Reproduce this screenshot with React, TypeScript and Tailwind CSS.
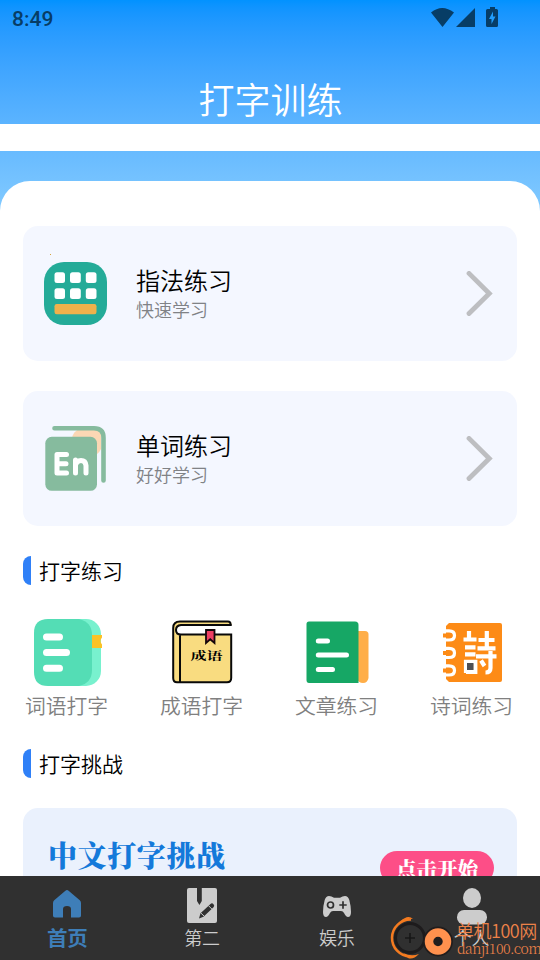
import type { ReactNode } from "react";

const Chevron = () => (
  <svg className="h-[46px] w-[28px]" viewBox="0 0 28 46" fill="none" stroke="#bdbec1" strokeWidth="4.8" strokeLinecap="round" strokeLinejoin="miter">
    <path d="M3 2.400 23.300 22.500 3 42.500" />
  </svg>
);

const KeyboardIcon = () => (
  <svg className="h-[64px] w-[64px]" viewBox="0 0 64 64">
    <rect width="63" height="63" rx="20" fill="#24ab98" />
    <g fill="#fff">
      <rect x="10.500" y="10.300" width="10.500" height="10.800" rx="2.500" />
      <rect x="26" y="10.300" width="10.800" height="10.800" rx="2.500" />
      <rect x="41.800" y="10.300" width="10.700" height="10.800" rx="2.500" />
      <rect x="10.500" y="26.200" width="10.500" height="10.800" rx="2.500" />
      <rect x="26" y="26.200" width="10.800" height="10.800" rx="2.500" />
      <rect x="41.800" y="26.200" width="10.700" height="10.800" rx="2.500" />
    </g>
    <rect x="10.500" y="42" width="42" height="10.300" rx="2.200" fill="#efb14b" />
  </svg>
);

const EnglishIcon = () => (
  <svg className="-mt-px h-[66px] w-[64px]" viewBox="0 0 64 66">
    <path d="M28 13C29 7 34 3 41 3h10q6 0 6 6v15q-1 3-5 6Z" fill="#fbd7b4" />
    <path d="M10.500 3.300H50q9.500 0 9.500 9.500V55.500" fill="none" stroke="#86bb9e" strokeWidth="4.600" strokeLinecap="round" />
    <rect x="1.300" y="11.800" width="51.700" height="54" rx="6.500" fill="#86bb9e" />
    <g fill="none" stroke="#fff" strokeWidth="5" strokeLinecap="round" strokeLinejoin="round">
      <path d="M22.500 29.500H13V48H22.500M13.500 38.700h8.500" />
      <path d="M31.500 35V48M31.500 40q1-4.500 5.500-4.500t5 5V48" />
    </g>
  </svg>
);

const WordsIcon = () => (
  <svg className="ml-1 h-[68px] w-[70px]" viewBox="0 0 70 68">
    <rect x="10" width="57" height="67" rx="15" fill="#78f1ce" />
    <path d="M14 0H45Q58 3 58 16V51Q58 64 45 67H14Q0 67 0 53V14Q0 0 14 0Z" fill="#54ddb5" />
    <path d="M58 16h10v2.500q-3 3.500 0 7V29H58Z" fill="#fbc226" />
    <path d="M12.500 18H25.500M12.500 33.500H32.500M12.500 49.300H25.500" stroke="#fff" strokeWidth="7" strokeLinecap="round" />
  </svg>
);

const IdiomIcon = () => (
  <svg className="ml-0.5 h-[66px] w-[62px]" viewBox="0 0 62 66">
    <path d="M1 7Q1 1.500 7 1.500H57Q59.500 1.500 59.500 4V58Q59.500 62.500 55 62.500H5Q1 62.500 1 58Z" fill="#f9dc80" />
    <path d="M61 4.800H9Q4 5 4 9.500T9 14H61V4.800Z" fill="#fff" />
    <path d="M58.500 5V4Q58.500 1.500 56 1.500H8Q1.200 1.500 1.200 8V58Q1.200 62.300 5 62.300H55Q59.200 62.300 59.200 58V14.500H9Q4 14.500 4 10T9 5H59M8 14.500V62" fill="none" stroke="#090909" strokeWidth="2" strokeLinecap="round" />
    <path d="M34 10H42.500V23L38.200 19.300 34 23Z" fill="#ef3f62" stroke="#14070a" strokeWidth="1.800" />
    <text x="34.500" y="40" fontSize="14" fontWeight="700" textAnchor="middle" textLength="32" lengthAdjust="spacingAndGlyphs" fontFamily="'Noto Serif CJK SC', 'Noto Sans CJK SC', serif" transform="translate(0 5.900) scale(1 .85)">成语</text>
  </svg>
);

const ArticleIcon = () => (
  <svg className="ml-[2px] h-[64px] w-[64px]" viewBox="0 0 64 64">
    <path d="M50 10h9q3.500 0 3.500 3.500V57q-1 5-5.500 5T50 57Z" fill="#ffae48" />
    <path d="M3 .5H49Q52.500.5 52.500 4V62H3Q.5 62 .5 59V3Q.5.5 3 .5Z" fill="#16a765" />
    <path d="M12.300 20H21.500M12.300 34H40.500M12.300 48.500H26.500" stroke="#fff" strokeWidth="5" strokeLinecap="round" />
  </svg>
);

const PoetryIcon = () => (
  <svg className="ml-0.5 h-[62px] w-[62px]" viewBox="0 0 62 62">
    <path d="M7 1h51q2 0 2 2v55q0 2-2 2H7l-3-3V4Z" fill="#fd8b16" />
    <g fill="none" strokeLinecap="butt">
      <path d="M0 8.800H7q5.500 0 5.500 4.600T7 18H0M0 26.300H7q5.500 0 5.500 4.600T7 35.500H0M0 43.800H7q5.500 0 5.500 4.600T7 53H0" stroke="#fff" strokeWidth="3.200" />
      <path d="M1 13.400H7M1 30.900H7M1 48.400H7" stroke="#fd8b16" strokeWidth="4" />
      <path d="M27 9v8M21.500 17.500H34.500M23 25.300H33.500M23 32.300H33.500M24 51V39.800H33.300V49.800H24M44.800 9V27M36.500 18H52.500M35.500 26.300H53.500M34 34.300H54.500M48.500 29V46q0 4.500-5 4.500M39 38.500l3.500 5.500" stroke="#fff" strokeWidth="4.200" />
    </g>
    <rect x="25" y="41" width="6.500" height="7" fill="#4d4f55" />
  </svg>
);

const HomeIcon = () => (
  <svg className="h-[28px] w-[28px]" viewBox="0 0 28 28" fill="#3e7eb8">
    <path d="M12.400.7q1.600-1.400 3.200 0L26.800 10.300Q28 11.300 28 13V25.700Q28 27.500 26 27.500H18V19q0-3-4-3t-4 3v8.500H2Q0 27.500 0 25.700V13q0-1.700 1.200-2.700Z" />
  </svg>
);

const NotebookIcon = () => (
  <svg className="h-[36px] w-[30px]" viewBox="0 0 30 36">
    <path d="M2 0H28q2 0 2 2V33q0 2-2 2H2q-2 0-2-2V2Q0 0 2 0Z" fill="#ccc" />
    <path d="M10 0h4.800v13L12.400 17 10 13Z" fill="#303030" />
    <path d="m12 30.500 1.500-5.200L23.500 16q1.500-1.400 3 .2t0 3.100l-10 9.500Z" fill="#303030" />
    <path d="m21.500 17.700 4 4M14 25.200l3.200 3" stroke="#ccc" />
  </svg>
);

const GamepadIcon = () => (
  <svg className="h-[22px] w-[28px]" viewBox="0 0 28 22">
    <path d="M6 0Q8.500 0 11 1.700h6Q19.500 0 22 0q3 0 4.300 4 1.700 6 1.700 12 0 5-3 5-2 0-4-4-1-2-3-2h-8q-2 0-3 2-2 4-4 4-3 0-3-5 0-6 1.700-12Q3 0 6 0Z" fill="#ccc" />
    <circle cx="7.500" cy="9" r="3" fill="none" stroke="#303030" strokeWidth="1.700" />
    <path d="M20 5.300v7.400M16.300 9h7.400" stroke="#303030" strokeWidth="1.700" />
  </svg>
);

const PersonIcon = () => (
  <svg className="h-[37px] w-[30px]" viewBox="0 0 30 37" fill="#ccc">
    <ellipse cx="15" cy="10" rx="9" ry="10" />
    <rect y="22" width="30" height="14.500" rx="7" />
  </svg>
);

function PracticeCard({ icon, title, subtitle }: { icon: ReactNode; title: string; subtitle: string }) {
  return (
    <div className="flex h-[135px] items-center rounded-[15px] bg-[#f4f7ff] pl-[21px] pr-[23px]">
      <div className="w-[92px]">{icon}</div>
      <div className="flex-1">
        <div className="text-2xl leading-[30px] text-black">{title}</div>
        <div className="text-lg leading-7 text-[#808286]">{subtitle}</div>
      </div>
      <Chevron />
    </div>
  );
}

function SectionTitle({ children }: { children: string }) {
  return (
    <div className="flex h-[29px] items-center gap-2 px-[23px]">
      <span className="h-[29px] w-2 rounded-l-lg bg-[#2f80f7]" />
      <h2 className="pb-px text-[21px] leading-[29px] text-black">{children}</h2>
    </div>
  );
}

const exercises = [
  { name: "词语打字", icon: <WordsIcon /> },
  { name: "成语打字", icon: <IdiomIcon /> },
  { name: "文章练习", icon: <ArticleIcon /> },
  { name: "诗词练习", icon: <PoetryIcon /> },
];

export default function App() {
  return (
    <div className="relative flex h-[960px] w-[540px] flex-col overflow-hidden bg-white font-['Noto_Sans_CJK_SC',sans-serif] font-[350]">
      <div className="h-[211px] shrink-0 bg-linear-to-b from-[#0292ff] to-[#82caff]">
        <div className="flex h-9 items-center justify-between pl-3 pr-[41px] text-[#073d66]">
          <span className="pt-[3px] font-[Roboto,sans-serif] text-[21px] font-medium leading-none">8:49</span>
          <svg className="h-[22px] w-[68px]" viewBox="0 0 68 22" fill="currentColor">
            <path d="M0 5.500Q11-3.500 23 5.500L11.500 20ZM44 1V20H25ZM59 2V0h5v2h1.500q1.500 0 1.500 1.500v15q0 1.500-1.500 1.500h-9q-1.500 0-1.500-1.500v-15Q55 2 56.500 2Z" />
            <path d="m62 4.500-4 7.500h2.500v5l4-7.500H62Z" fill="#229dfb" />
          </svg>
        </div>
        <h1 className="h-[88px] pl-px pt-[36px] text-center text-4xl leading-[52px] text-white">打字训练</h1>
        <div className="h-[27px] bg-white" />
      </div>

      <main className="-mt-[30px] flex shrink-0 flex-col rounded-t-[30px] bg-white pt-[45px]">
        <section className="flex flex-col gap-[30px] px-[23px]">
          <PracticeCard icon={<KeyboardIcon />} title="指法练习" subtitle="快速学习" />
          <PracticeCard icon={<EnglishIcon />} title="单词练习" subtitle="好好学习" />
        </section>

        <div className="pt-[30px]">
          <SectionTitle>打字练习</SectionTitle>
        </div>
        <section className="-ml-px mr-px grid h-[164px] grid-cols-4 pt-[33px]">
          {exercises.map((item) => (
            <div key={item.name} className="flex flex-col items-center">
              <div className="flex h-[70px] items-center">{item.icon}</div>
              <span className="text-[20.800px] leading-[34px] text-[#808080]">{item.name}</span>
            </div>
          ))}
        </section>
        <SectionTitle>打字挑战</SectionTitle>
        <section className="mx-[23px] mt-[30px] flex h-[135px] justify-between rounded-[15px] bg-[#eaf1fd] pl-[25px] pr-[23px] font-['Noto_Serif_CJK_SC','Noto_Sans_CJK_SC',serif]">
          <span className="pt-[27px] text-[29px] font-black leading-[40px] tracking-[0.600px] text-[#1479da]">中文打字挑战</span>
          <span className="mt-[43px] h-[34px] w-[114px] rounded-full bg-[#fd4e87] text-center text-[20.500px] font-black leading-[34px] text-white">点击开始</span>
        </section>
      </main>

      <nav className="absolute inset-x-0 bottom-0 grid h-[84px] grid-cols-4 bg-[#303030] pr-px text-lg leading-6 text-[#ccc]">
        <div className="flex flex-col items-center text-[#3e7eb8]">
          <div className="flex h-[49px] items-center pt-[6px]"><HomeIcon /></div>
          <span className="text-[20.500px] font-bold">首页</span>
        </div>
        <div className="flex flex-col items-center">
          <div className="flex h-[49px] items-center pt-[11px]"><NotebookIcon /></div>
          <span>第二</span>
        </div>
        <div className="flex flex-col items-center">
          <div className="flex h-[49px] items-center pt-[12px]"><GamepadIcon /></div>
          <span>娱乐</span>
        </div>
        <div className="flex flex-col items-center">
          <div className="flex h-[49px] items-center pt-[12px]"><PersonIcon /></div>
          <span>个人</span>
        </div>
      </nav>

      <div className="absolute bottom-0 right-0 flex h-[44px] w-[150px] items-start">
        <svg className="h-[44px] w-[66px] shrink-0" viewBox="0 0 66 44" fill="none">
          <circle cx="20" cy="22" r="14.500" fill="#303030" stroke="#1d1b1c" strokeWidth="3" />
          <path d="M21 3.500A18.500 18.500 0 0 0 20 40.500" stroke="#f47b20" strokeWidth="2.500" />
          <path d="M10 5.500Q18-2 23 3q-7-1-13 2.500ZM13 37q8 4 16 1-6 6-11 4Z" fill="#f47b20" />
          <path d="M20 17v10M15 22h10" stroke="#171717" strokeWidth="1.600" />
          <circle cx="48" cy="25.500" r="15" fill="#211d1d" />
          <circle cx="48" cy="25.500" r="9" stroke="#ff914e" strokeWidth="8.500" />
        </svg>
        <div className="pt-[3px] text-[#ed8249]">
          <div className="whitespace-nowrap text-[18px] leading-[22px] tracking-[-0.500px]">单机100网</div>
          <div className="-mt-px pl-px font-['Noto_Serif_CJK_SC','Liberation_Serif',serif] text-[14px] leading-[17px] tracking-[-0.500px]">danji100.com</div>
        </div>
      </div>

      <span className="absolute left-[50px] top-[254px] h-px w-px bg-[#d6a33d]" />
    </div>
  );
}
